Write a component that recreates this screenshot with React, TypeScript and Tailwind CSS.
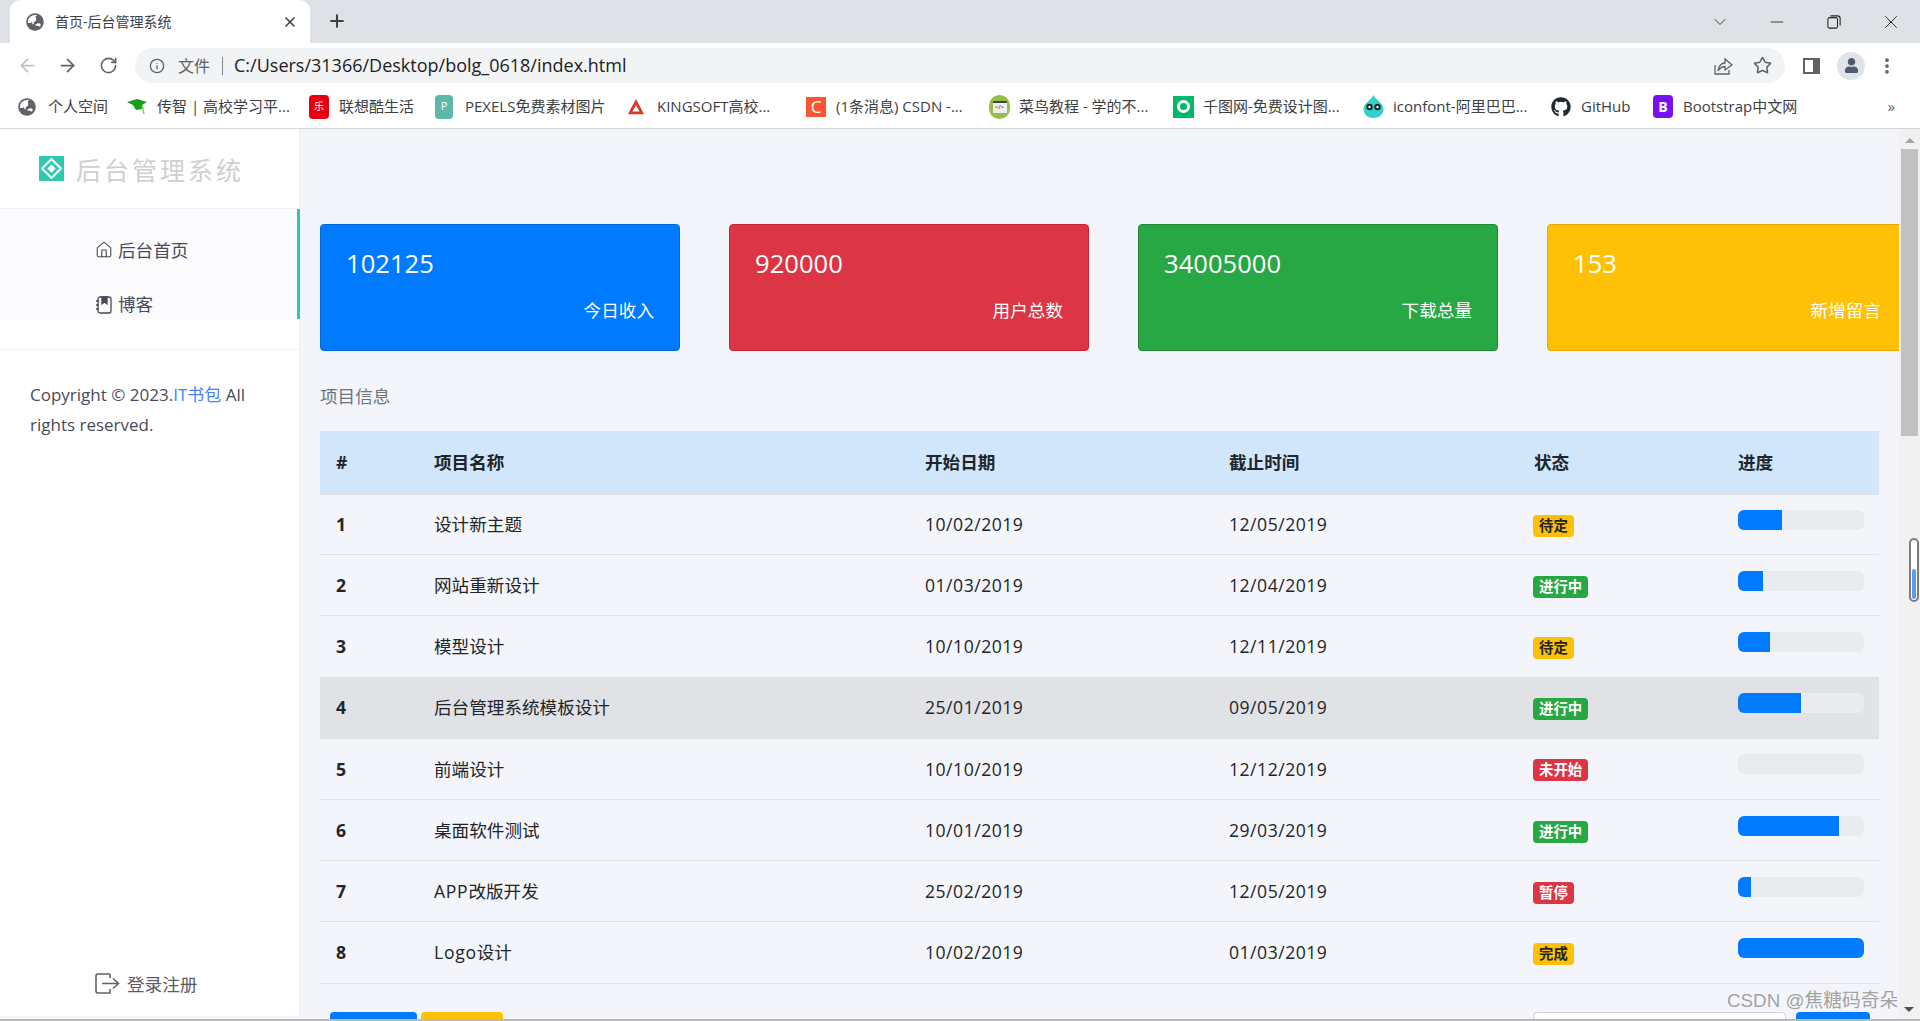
import { ArrowLeft, ArrowRight, RotateCw, Info, Star, Plus, X, ChevronDown, Minus, Home, MoreVertical } from "lucide-react";
import { FaGlobeAsia, FaGithub, FaUser } from "react-icons/fa";

const bookmarks = [
  { label: "个人空间", w: "w-[109px]", icon: <FaGlobeAsia className="text-[#5f6368] text-[18px]" /> },
  {
    label: "传智 | 高校学习平...",
    w: "w-[182px]",
    icon: (
      <svg viewBox="0 0 20 20" className="w-5 h-5">
        <path d="M0 5 L10 2 L20 5 L15 8 L15 12 L9 13 L6 8 Z" fill="#1a9a1a" />
        <path d="M15 8 L17 17" stroke="#6fdc5f" strokeWidth="1.5" />
      </svg>
    ),
  },
  {
    label: "联想酷生活",
    w: "w-[126px]",
    icon: <div className="w-5 h-6 rounded bg-[#e60012] text-white text-[10px] flex items-center justify-center">乐</div>,
  },
  {
    label: "PEXELS免费素材图片",
    w: "w-[192px]",
    icon: <div className="w-[18px] h-6 rounded-sm bg-[#5cb8a8] text-white text-[11px] flex items-center justify-center">P</div>,
  },
  {
    label: "KINGSOFT高校...",
    w: "w-[179px]",
    icon: (
      <svg viewBox="0 0 20 20" className="w-[18px] h-[18px]">
        <path d="M10 1 L19 18 L1 18 Z" fill="#d9352a" />
        <path d="M10 8 L14 15 L6 15 Z" fill="#fff" />
      </svg>
    ),
  },
  {
    label: "(1条消息) CSDN -...",
    w: "w-[183px]",
    icon: <div className="w-5 h-5 bg-[#fc5531] text-white text-[17px] leading-5 text-center">C</div>,
  },
  {
    label: "菜鸟教程 - 学的不...",
    w: "w-[184px]",
    icon: (
      <div className="w-[21px] h-[24px] rounded-full bg-[#96bf48] flex items-center justify-center">
        <div className="w-[14px] h-[12px] bg-[#eee] border-t-2 border-[#444] text-[6px] leading-[9px] text-center">&lt;/&gt;</div>
      </div>
    ),
  },
  {
    label: "千图网-免费设计图...",
    w: "w-[190px]",
    icon: (
      <div className="w-[21px] h-[22px] bg-[#00b86b] flex items-center justify-center">
        <div className="w-[13px] h-[13px] rounded-full border-[3px] border-white" />
      </div>
    ),
  },
  {
    label: "iconfont-阿里巴巴...",
    w: "w-[188px]",
    icon: (
      <svg viewBox="0 0 20 24" className="w-[21px] h-[24px]">
        <path d="M10 0 C12 5 20 8 20 14 C20 20 15 23 10 23 C5 23 0 20 0 14 C0 8 8 5 10 0 Z" fill="#2fd3cc" />
        <circle cx="6" cy="12" r="3.2" fill="#222" />
        <circle cx="14" cy="12" r="3.2" fill="#222" />
        <circle cx="6" cy="12" r="1.2" fill="#fff" />
        <circle cx="14" cy="12" r="1.2" fill="#fff" />
      </svg>
    ),
  },
  { label: "GitHub", w: "w-[102px]", icon: <FaGithub className="text-[#24292f] text-[20px]" /> },
  {
    label: "Bootstrap中文网",
    w: "w-[160px]",
    icon: <div className="w-5 h-[23px] rounded-sm bg-[#7a10f2] text-white text-[14px] font-bold flex items-center justify-center">B</div>,
  },
];

const stats = [
  { value: "102125", label: "今日收入", color: "bg-[#007bff] border-[#0069d9]" },
  { value: "920000", label: "用户总数", color: "bg-[#dc3545] border-[#c82333]" },
  { value: "34005000", label: "下载总量", color: "bg-[#28a745] border-[#218838]" },
  { value: "153", label: "新增留言", color: "bg-[#ffc107] border-[#e0a800]" },
];

const rows = [
  { id: 1, prefix: "", name: "设计新主题", start: "10/02/2019", end: "12/05/2019", status: "待定", badge: "bg-[#ffc107] text-[#212529]", pct: 35 },
  { id: 2, prefix: "", name: "网站重新设计", start: "01/03/2019", end: "12/04/2019", status: "进行中", badge: "bg-[#28a745] text-white", pct: 20 },
  { id: 3, prefix: "", name: "模型设计", start: "10/10/2019", end: "12/11/2019", status: "待定", badge: "bg-[#ffc107] text-[#212529]", pct: 25 },
  { id: 4, prefix: "", name: "后台管理系统模板设计", start: "25/01/2019", end: "09/05/2019", status: "进行中", badge: "bg-[#28a745] text-white", pct: 50 },
  { id: 5, prefix: "", name: "前端设计", start: "10/10/2019", end: "12/12/2019", status: "未开始", badge: "bg-[#dc3545] text-white", pct: 0 },
  { id: 6, prefix: "", name: "桌面软件测试", start: "10/01/2019", end: "29/03/2019", status: "进行中", badge: "bg-[#28a745] text-white", pct: 80 },
  { id: 7, prefix: "APP", name: "改版开发", start: "25/02/2019", end: "12/05/2019", status: "暂停", badge: "bg-[#dc3545] text-white", pct: 10 },
  { id: 8, prefix: "Logo", name: "设计", start: "10/02/2019", end: "01/03/2019", status: "完成", badge: "bg-[#ffc107] text-[#212529]", pct: 100 },
];

const font = "font-['Open_Sans','Noto_Sans_CJK_SC',sans-serif]";

const BrowserChrome = () => (
  <div className="shrink-0 bg-white">
    <div className="h-[43px] bg-[#dee1e6] flex items-end pl-[10px]">
      <div className="relative w-[300px] h-[43px] bg-white rounded-t-[10px] flex items-center pl-4 pr-[12px]">
        <FaGlobeAsia className="text-[#5f6368] text-[18px] shrink-0" />
        <span className="ml-[11px] text-[14px] text-[#3c4043]">首页-后台管理系统</span>
        <X size={16} strokeWidth={2.5} className="ml-auto text-[#3c4043]" />
      </div>
      <Plus size={20} strokeWidth={2.5} className="ml-[17px] mb-[12px] text-[#3c4043]" />
      <div className="ml-auto h-[43px] flex items-center text-[#222]">
        <div className="w-[57px] flex justify-center"><ChevronDown size={20} strokeWidth={1} /></div>
        <div className="w-[57px] flex justify-center"><Minus size={20} strokeWidth={1} /></div>
        <div className="w-[57px] flex justify-center">
          <svg viewBox="0 0 16 16" className="w-[14px] h-[14px]" fill="none" stroke="#222" strokeWidth="1.2">
            <rect x="1" y="3" width="11" height="12" rx="2" />
            <path d="M4 1 H12 Q15 1 15 4 V12" />
          </svg>
        </div>
        <div className="w-[58px] flex justify-center"><X size={22} strokeWidth={1} /></div>
      </div>
    </div>
    <div className="h-[45px] flex items-center text-[#5f6368]">
      <ArrowLeft size={21} className="ml-[17px] text-[#bdc1c6]" />
      <ArrowRight size={21} className="ml-[19px] text-[#5f6368]" />
      <RotateCw size={19} className="ml-[21px] text-[#5f6368]" />
      <div className="ml-[17px] w-[1650px] h-[35px] rounded-full bg-[#f1f3f4] flex items-center pl-[14px] pr-[14px]">
        <Info size={16} className="text-[#5f6368]" />
        <span className="ml-[13px] text-[16px] text-[#5f6368]">文件</span>
        <span className="ml-[12px] w-px h-[18px] bg-[#80868b]" />
        <span className="ml-[11px] text-[18px] text-[#202124]">C:/Users/31366/Desktop/bolg_0618/index.html</span>
        <svg viewBox="0 0 20 20" className="ml-auto w-5 h-5" fill="none" stroke="#5f6368" strokeWidth="1.3">
          <path d="M2 9 V18 H16 V14" />
          <path d="M5 15 C6 9 9 7 12 7 V3 L19 9 L12 14 V10.5 C9 10.5 7 12 5 15 Z" />
        </svg>
        <Star size={19} strokeWidth={2} className="ml-[20px] -mr-px text-[#5f6368]" />
      </div>
      <div className="ml-[18px] w-[17px] h-[16px] border-2 border-[#5f6368] border-r-[7px]" />
      <div className="ml-[17px] w-[28px] h-[28px] rounded-full bg-[#e0e3e9] flex items-center justify-center">
        <FaUser className="text-[#4f5b6d] text-[15px]" />
      </div>
      <MoreVertical size={20} strokeWidth={2.5} className="ml-[12px] text-[#5f6368]" />
    </div>
    <div className="h-[41px] border-b border-[#d5d6da] flex items-center pl-[18px] pb-[3px] relative">
      {bookmarks.map((b) => (
        <div key={b.label} className={`flex items-center shrink-0 ${b.w}`}>
          <div className="w-[30px] flex items-center shrink-0">{b.icon}</div>
          <span className="text-[15px] text-[#3c4043] whitespace-nowrap">{b.label}</span>
        </div>
      ))}
      <span className="ml-auto mr-[25px] text-[15px] text-[#5f6368]">»</span>
    </div>
  </div>
);

const Sidebar = () => (
  <aside className="w-[300px] shrink-0 bg-white flex flex-col mb-[3px] border-r border-[#f0f1f5]">
    <div className="h-[80px] flex items-center pl-[39px] border-b border-[#f1f1f4]">
      <div className="w-[25px] h-[25px] bg-[#2fc9b0] flex items-center justify-center">
        <svg viewBox="0 0 20 20" className="w-[21px] h-[21px]" fill="none" stroke="#fff" strokeWidth="2">
          <path d="M10 1 L19 10 L10 19 L1 10 Z" />
          <path d="M6 7 L13 14 M7 6 L14 13 M13 6 L6 13" strokeWidth="1.2" stroke="#2fc9b0" />
          <path d="M6 10 L10 6 L14 10 L10 14 Z" fill="#fff" stroke="none" />
        </svg>
      </div>
      <span className="ml-[12px] pt-[4px] text-[25px] tracking-[3px] text-[#cfcfcf] whitespace-nowrap">后台管理系统</span>
    </div>
    <div className="h-[110px] overflow-hidden bg-[#fbfbfd] border-r-[3px] border-[#2fc9b0] -mr-px pl-[95px] pt-[14px]">
      <div className="h-[54px] flex items-center text-[#4a4a5a]">
        <Home size={18} strokeWidth={1.5} />
        <span className="ml-[5px] text-[17.6px]">后台首页</span>
      </div>
      <div className="h-[55px] flex items-center text-[#4a4a5a]">
        <svg viewBox="0 0 16 18" className="w-[18px] h-[18px]" fill="none" stroke="#4a4a5a" strokeWidth="1.3">
          <rect x="2" y="1" width="13" height="16" rx="2" />
          <path d="M6 1 V8 L8.5 6 L11 8 V1 Z" fill="#4a4a5a" />
          <path d="M0 5 H3 M0 9 H3 M0 13 H3" />
        </svg>
        <span className="ml-[5px] text-[17.6px]">博客</span>
      </div>
    </div>
    <div className="mt-[30px] border-t border-[#f0f0f3] px-[30px] pt-[30px] text-[17px] leading-[30px] text-[#4a4a5a]">
      Copyright © 2023.<span className="text-[#4680ff]">IT书包</span> All rights reserved.
    </div>
    <div className="mt-auto mb-[19px] pl-[95px] flex items-center text-[#5a5a68]">
      <svg viewBox="0 0 25 21" className="w-[25px] h-[21px]" fill="none" stroke="#5f6368" strokeWidth="1.6">
        <path d="M15 1 H3 Q1 1 1 3 V18 Q1 20 3 20 H15 V16" />
        <path d="M15 1 V5" />
        <path d="M7 10.5 H23 M18 5.5 L23.5 10.5 L18 15.5" />
      </svg>
      <span className="ml-[7px] text-[17.6px]">登录注册</span>
    </div>
  </aside>
);

const StatCard = ({ value, label, color }: { value: string; label: string; color: string }) => (
  <div className={`w-[360px] h-[127px] shrink-0 rounded border ${color} pl-[25px] pr-[25px] pt-[20px] text-white`}>
    <div className="text-[25.6px] leading-[38px]">{value}</div>
    <div className="text-right text-[17.6px] leading-[26px] mt-[14px]">{label}</div>
  </div>
);

const ProjectTable = () => (
  <table className="w-[1559px] table-fixed border-collapse text-[17.6px] text-[#212529]">
    <colgroup>
      <col className="w-[98px]" />
      <col className="w-[491px]" />
      <col className="w-[304px]" />
      <col className="w-[305px]" />
      <col className="w-[204px]" />
      <col className="w-[157px]" />
    </colgroup>
    <thead>
      <tr className="h-[62px] bg-[#d1e6fb] border-y border-[#dee2e6] border-b-2 font-bold text-left">
        <th className="pl-4">#</th>
        <th className="pl-4">项目名称</th>
        <th className="pl-4">开始日期</th>
        <th className="pl-4">截止时间</th>
        <th className="pl-4">状态</th>
        <th className="pl-4">进度</th>
      </tr>
    </thead>
    <tbody>
      {rows.map((r) => (
        <tr key={r.id} className={`h-[61.2px] border-b border-[#dee2e6] ${r.id === 4 ? "bg-[#e1e2e6]" : ""}`}>
          <td className="pl-4 font-bold">{r.id}</td>
          <td className="pl-4">
            <span className="tracking-[0.7px]">{r.prefix}</span>
            {r.name}
          </td>
          <td className="pl-4 tracking-[0.5px]">{r.start}</td>
          <td className="pl-4 tracking-[0.5px]">{r.end}</td>
          <td className="pl-4">
            <span className={`inline-block h-[22px] leading-[22px] px-[6px] -ml-px -mt-[1px] rounded text-[14.4px] font-bold tracking-normal align-middle ${r.badge}`}>{r.status}</span>
          </td>
          <td className="pl-4">
            <div className="w-[126px] h-5 -mt-[9px] rounded-md bg-[#e9ecef] overflow-hidden">
              <div className="h-full bg-[#007bff]" style={{ width: `${r.pct}%` }} />
            </div>
          </td>
        </tr>
      ))}
    </tbody>
  </table>
);

export default function App() {
  return (
    <div className={`h-[1021px] w-[1920px] overflow-hidden flex flex-col relative ${font}`}>
      <BrowserChrome />
      <div className="flex-1 min-h-0 flex bg-[#f3f5fa]">
        <Sidebar />
        <main className="flex-1 min-w-0 overflow-hidden pl-[20px] pt-[95px]">
          <div className="flex gap-[49px]">
            {stats.map((s) => (
              <StatCard key={s.label} {...s} />
            ))}
          </div>
          <h2 className="mt-[32px] text-[17.6px] leading-[26px] text-[#6c757d]">项目信息</h2>
          <div className="mt-[22px]">
            <ProjectTable />
          </div>
          <div className="mt-[28px] flex items-start pl-[10px] w-[1560px]">
            <button className="w-[87px] h-[38px] rounded bg-[#007bff]" />
            <button className="ml-1 w-[82px] h-[38px] rounded bg-[#ffc107]" />
            <div className="ml-auto w-[253px] h-[38px] rounded border border-[#ced4da] bg-white" />
            <button className="ml-[10px] mr-[10px] w-[74px] h-[38px] rounded bg-[#007bff]" />
          </div>
        </main>
        <div className="w-[21px] shrink-0 bg-[#f1f1f1] flex flex-col items-center">
          <div className="mt-[9px] w-0 h-0 border-x-[5px] border-x-transparent border-b-[5px] border-b-[#a3a3a3]" />
          <div className="mt-[6px] w-[17px] h-[287px] bg-[#c1c1c1]" />
        </div>
      </div>
      <div className="h-[2px] shrink-0 bg-[#b9b9b9]" />
      <div className="absolute left-[1909px] top-[538px] w-[10px] h-[64px] rounded-full border-2 border-[#7d7d7d] bg-white flex flex-col justify-end items-center p-px">
        <div className="w-[4px] h-[30px] rounded-full bg-[#5a9cf5]" />
      </div>
      <div className="absolute left-[1904px] top-[1007px] w-0 h-0 border-x-[5px] border-x-transparent border-t-[5px] border-t-[#505050]" />
      <div className="absolute left-[1727px] top-[988px] text-[18.8px] leading-[26px] text-[#8c8c8c]/80 font-['Liberation_Sans','Noto_Sans_CJK_SC',sans-serif]">CSDN @焦糖码奇朵</div>
    </div>
  );
}
